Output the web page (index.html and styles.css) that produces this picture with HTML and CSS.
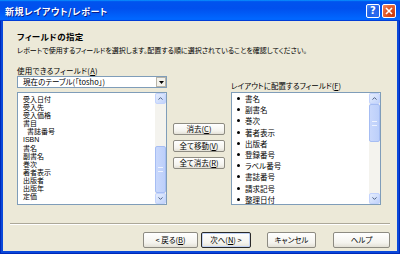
FILE: index.html
```html
<!DOCTYPE html>
<html lang="ja">
<head>
<meta charset="utf-8">
<title>新規レイアウト/レポート</title>
<link rel="stylesheet" href="styles.css">
</head>
<body>
<div class="window">
  <div class="titlebar">
    <span class="title">新規レイアウト/レポート</span>
    <div class="tb-buttons">
      <span class="tb-btn help">?</span>
      <span class="tb-btn close"><svg width="8" height="8" viewBox="0 0 8 8"><path d="M1 1L7 7M7 1L1 7" stroke="#fff" stroke-width="1.6"/></svg></span>
    </div>
  </div>
  <div class="frame">
    <div class="client">
      <div class="header">
        <div class="h-title">フィールドの指定</div>
        <div class="h-sub">レポートで使用するフィールドを選択します。配置する順に選択されていることを確認してください。</div>
      </div>
      <div class="main">
        <div class="col col-left">
          <div class="label">使用できるフィールド(<u>A</u>)</div>
          <div class="combo">
            <span class="combo-text">現在のテーブル(「tosho」)</span>
            <span class="combo-btn"><svg width="5" height="3" viewBox="0 0 5 3"><path d="M0 0H5L2.5 3Z" fill="#000"/></svg></span>
          </div>
          <div class="listbox">
            <ul class="items items-left">
              <li>受入日付</li>
              <li>受入先</li>
              <li>受入価格</li>
              <li>書目</li>
              <li class="indent">書誌番号</li>
              <li>ISBN</li>
              <li>書名</li>
              <li>副書名</li>
              <li>巻次</li>
              <li>著者表示</li>
              <li>出版者</li>
              <li>出版年</li>
              <li>定価</li>
            </ul>
            <div class="scrollbar">
              <span class="sb-arrow"><svg width="5" height="3" viewBox="0 0 5 3"><path d="M0.5 2.6L2.5 0.6L4.5 2.6" fill="none" stroke="#4D6185" stroke-width="1"/></svg></span>
              <div class="sb-track track-bottom"><span class="sb-thumb thumb-left"><i></i></span></div>
              <span class="sb-arrow"><svg width="5" height="3" viewBox="0 0 5 3"><path d="M0.5 0.4L2.5 2.4L4.5 0.4" fill="none" stroke="#4D6185" stroke-width="1"/></svg></span>
            </div>
          </div>
        </div>
        <div class="col col-mid">
          <button class="btn btn-small">消去(<u>C</u>)</button>
          <button class="btn btn-small">全て移動(<u>V</u>)</button>
          <button class="btn btn-small">全て消去(<u>R</u>)</button>
        </div>
        <div class="col col-right">
          <div class="label">レイアウトに配置するフィールド(<u>F</u>)</div>
          <div class="listbox">
            <ul class="items items-right">
              <li>書名</li>
              <li>副書名</li>
              <li>巻次</li>
              <li>著者表示</li>
              <li>出版者</li>
              <li>登録番号</li>
              <li>ラベル番号</li>
              <li>書誌番号</li>
              <li>請求記号</li>
              <li>整理日付</li>
            </ul>
            <div class="scrollbar">
              <span class="sb-arrow"><svg width="5" height="3" viewBox="0 0 5 3"><path d="M0.5 2.6L2.5 0.6L4.5 2.6" fill="none" stroke="#4D6185" stroke-width="1"/></svg></span>
              <div class="sb-track"><span class="sb-thumb thumb-right"><i></i></span></div>
              <span class="sb-arrow"><svg width="5" height="3" viewBox="0 0 5 3"><path d="M0.5 0.4L2.5 2.4L4.5 0.4" fill="none" stroke="#4D6185" stroke-width="1"/></svg></span>
            </div>
          </div>
        </div>
      </div>
      <div class="sep"></div>
      <div class="footer">
        <button class="btn btn-back">&lt; 戻る(<u>B</u>)</button>
        <button class="btn btn-next btn-default">次へ(<u>N</u>) &gt;</button>
        <button class="btn btn-cancel">キャンセル</button>
        <button class="btn btn-help">ヘルプ</button>
      </div>
    </div>
  </div>
</div>
</body>
</html>
```

FILE: styles.css
```css
* { box-sizing: border-box; margin: 0; padding: 0; }
html, body { width: 400px; height: 254px; overflow: hidden; background: #ffffff; }
body {
  font-family: "Noto Sans CJK JP", "Noto Sans", sans-serif;
  font-size: 7.5px;
  color: #000000;
  font-feature-settings: "palt";
}
u { text-decoration: underline; text-underline-offset: 1px; }

.window { width: 400px; height: 254px; display: flex; flex-direction: column; background: #0842d8; }

.titlebar {
  height: 21px; flex: none;
  display: flex; align-items: center; justify-content: space-between;
  padding: 0 4px 0 5px;
  background: linear-gradient(180deg, #0997ff, #0053ee 8%, #0050ee 40%, #0066ff 88%, #0066ff 93%, #005bff 95%, #003dd7 96%, #003dd7);
}
.title { color: #ffffff; font-weight: bold; font-size: 9px; letter-spacing: 0.6px; text-shadow: 1px 1px 0 #0a1c8a; padding-top: 1px; }
.tb-buttons { display: flex; gap: 2px; }
.tb-btn {
  width: 14px; height: 14px; border: 1px solid #ffffff; border-radius: 2px;
  display: flex; align-items: center; justify-content: center;
  color: #ffffff; font-family: "DejaVu Sans", sans-serif; font-weight: bold; font-size: 10px;
}
.help { background: radial-gradient(circle at 70% 75%, #2c6cf0, #1f5fe6 50%, #4c8cf8); }
.close { background: radial-gradient(circle at 80% 80%, #c8390c, #e05a2b 55%, #f08a68); }

.frame { flex: 1; padding: 0 3px 3px; background: #0a48da; box-shadow: inset 1px 0 #0029b8, inset -1px 0 #0029b8, inset 0 -1px #0029b8; }
.client { height: 100%; background: #ece9d8; display: flex; flex-direction: column; }

.header { padding: 10px 0 0 14px; }
.h-title { font-weight: bold; font-size: 8.5px; letter-spacing: 0.4px; line-height: 10px; }
.h-sub { margin-top: 4px; line-height: 10px; font-size: 7px; }

.main { display: flex; align-items: flex-start; gap: 6px; margin-top: 11px; padding-left: 14px; }
.col { display: flex; flex-direction: column; }
.col-left { width: 150px; }
.col-mid { width: 52px; gap: 5px; padding-top: 57px; }
.col-right { width: 150px; padding-top: 15px; }
.label { line-height: 10px; height: 10px; }
.col-left .label { letter-spacing: 0.3px; }
.col-right .label { margin-bottom: 1px; }

.combo {
  height: 12px; margin-bottom: 4px;
  border: 1px solid #7f9db9; background: #ffffff;
  display: flex; align-items: center; justify-content: space-between;
  padding: 0 0 0 5px;
}
.combo-text { line-height: 10px; }
.combo-btn {
  width: 10px; height: 10px; border: 1px solid #b8b4a8; background: #f3f2ec;
  display: flex; align-items: center; justify-content: center;
}

.listbox { height: 113px; border: 1px solid #7f9db9; background: #ffffff; display: flex; }
.items { flex: 1; list-style: none; overflow: hidden; }
.items-left { padding: 3px 0 0 5px; font-family: "Liberation Sans", "Noto Sans CJK JP", sans-serif; font-size: 7px; }
.items-left li { line-height: 8.1px; height: 8.1px; }
.items-left li.indent { padding-left: 4px; }
.items-right { padding: 0 0 0 5px; }
.items-right li { line-height: 11.2px; height: 11.2px; display: flex; align-items: center; }
.items-right li::before {
  content: ""; width: 3px; height: 3px; border-radius: 50%; background: #000000;
  margin-right: 5px;
}

.scrollbar { width: 11px; display: flex; flex-direction: column; background: #f4f3ee; }
.sb-arrow {
  height: 11px; flex: none;
  border: 1px solid #c3d3fd; border-radius: 2px;
  background: linear-gradient(135deg, #e6eefc, #c1d3fb);
  display: flex; align-items: center; justify-content: center;
}
.sb-track { flex: 1; display: flex; flex-direction: column; }
.track-bottom { justify-content: flex-end; }
.sb-thumb {
  border: 1px solid #a6bdf3; border-radius: 2px;
  background: linear-gradient(90deg, #c9d8fc, #bccffa);
  display: flex; align-items: center; justify-content: center;
}
.sb-thumb i { display: block; width: 5px; height: 5px; border-top: 1px solid #eef3fe; border-bottom: 1px solid #eef3fe; }
.thumb-left { height: 47px; }
.thumb-right { height: 38px; }

.btn {
  font-family: inherit; font-size: 7.5px; color: #000000;
  border: 1px solid #8d8b82; border-radius: 2px;
  background: linear-gradient(180deg, #ffffff, #f4f3ee 70%, #e3e0d6);
  display: flex; align-items: center; justify-content: center;
  line-height: 10px; font-feature-settings: "palt";
}
.btn-small { height: 12px; width: 52px; }

.sep { margin: 18px 7px 0; height: 2px; border-top: 1px solid #aca899; border-bottom: 1px solid #ffffff; flex: none; }

.footer { display: flex; justify-content: flex-end; padding-right: 7px; margin-top: 7px; }
.footer .btn { height: 16px; }
.btn-back { width: 55px; }
.btn-next { width: 50px; margin-left: 3px; }
.btn-cancel { width: 49px; margin-left: 16px; }
.btn-help { width: 57px; margin-left: 17px; }
.btn-default { border-color: #2a2a2a; box-shadow: inset 0 0 0 1px #c2d3f5; }
```
